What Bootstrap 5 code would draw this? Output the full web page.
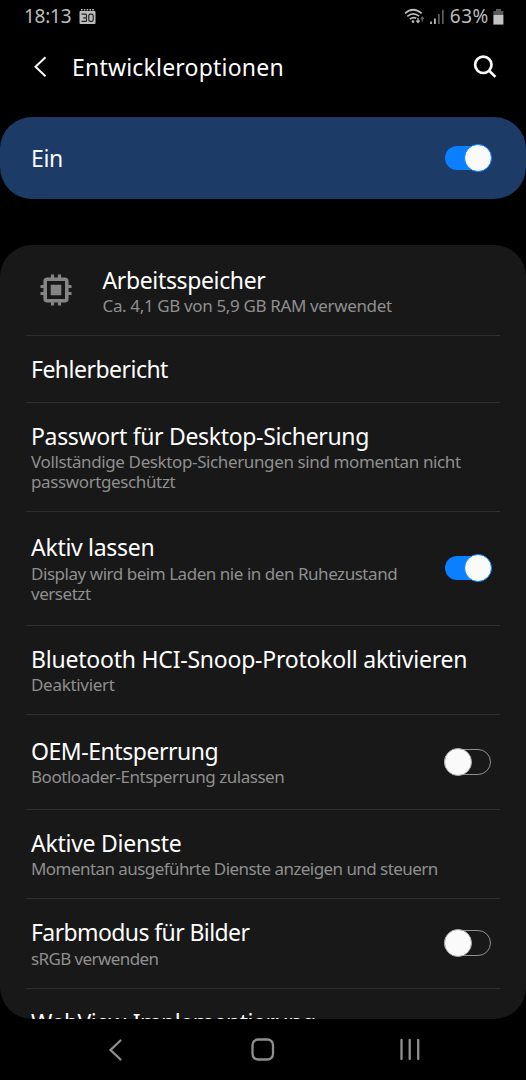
<!DOCTYPE html>
<html lang="de" data-bs-theme="dark">
<head>
<meta charset="utf-8">
<meta name="viewport" content="width=device-width, initial-scale=1">
<title>Entwickleroptionen</title>
<link href="https://cdn.jsdelivr.net/npm/bootstrap@5.3.0/dist/css/bootstrap.min.css" rel="stylesheet">
<style>
  body { background: #000; color: #fafafa; font-family: "Noto Sans", "Open Sans", sans-serif; }
  svg { display: block; flex: none; }
  .statusbar { height: 33px; padding: 0 22px 0 24px; color: #bcbcbc; font-size: 19px; line-height: 33px; letter-spacing: -.25px; }
  .statusbar .charge { margin-left: 6px; letter-spacing: .6px; }
  .appbar { height: 84px; padding: 0 29px 16px 33px; }
  .appbar h1 { font-size: 23px; line-height: 30px; letter-spacing: .2px; margin-left: 24px; }
  .master { height: 82px; margin-bottom: 46px; padding: 0 34px 0 31px; background: #1c3b66; border-radius: 32px; font-size: 23px; letter-spacing: -.3px; }
  .master span:first-child { margin-top: 1px; }
  .panel { height: 774px; background: #181818; border-radius: 32px; padding-top: .6px; }
  .entry { height: var(--h, 89.5px); margin: 0 26px; padding: var(--top, 18px) 8px 0 5px; border-bottom: 1.5px solid #2e2e2e; white-space: nowrap; }
  .entry h2 { font-size: 23px; line-height: 30px; margin: 0 0 1.9px; letter-spacing: var(--t, 0); }
  .entry p { font-size: 17px; line-height: 19.7px; color: #8f8f8f; letter-spacing: var(--s, 0); }
  .entry .toggle { align-self: center; margin-top: calc(-.6px - var(--top, 18px)); }
  .ram { --h: 90px; --top: 19px; --t: -.36px; --s: -.36px; }
  .bugreport { --h: 67px; --t: -.52px; }
  .backup { --h: 109px; --t: -.33px; --s: -.38px; }
  .awake { --h: 114.5px; --top: 20.5px; --t: -.3px; --s: -.46px; }
  .snoop { --h: 89px; --top: 17.5px; --t: -.22px; --s: -.3px; }
  .oem { --h: 94.5px; --top: 20.5px; --t: -.45px; --s: -.46px; }
  .running { --t: -.26px; --s: -.56px; }
  .colormode { --t: -.6px; --s: -.6px; }
  .webview { --t: -.5px; border: 0; }
  .toggle { position: relative; width: 48px; height: 28px; flex: none; }
  .toggle::before { content: ""; position: absolute; inset: 1px 1px 1px 0; border: 1.5px solid #8f8f8f; border-radius: 14px; }
  .toggle::after { content: ""; position: absolute; top: 0; left: 0; width: 28px; height: 28px; border: 1px solid #a5a5a5; border-radius: 50%; background: #fafafa; }
  .toggle.on::before { inset: 2px 2px 2px 1px; background: #0a7fff; border: 0; }
  .toggle.on::after { left: 20px; border-color: #0a7fff; }
  .navkeys { height: 61px; }
</style>
</head>
<body class="overflow-hidden">
<header>
  <div class="statusbar d-flex align-items-center">
    <span>18:13</span>
    <svg class="ms-2" width="17" height="16" viewBox="0 0 17 16"><path d="M1.5 2h14a1 1 0 0 1 1 1v11a1 1 0 0 1-1 1h-14a1 1 0 0 1-1-1V3a1 1 0 0 1 1-1z" fill="#bcbcbc"/><path d="M2 .8h13" stroke="#bcbcbc" stroke-width="1.4" stroke-dasharray="1.6 1.2"/><path d="M2.5 5.2h4q1 0 1 1V8q0 .8-.8.8H4M6.7 8.8q.8 0 .8.9v1.7q0 1-1 1h-4" fill="none" stroke="#222" stroke-width="1.2"/><rect x="9.8" y="5.2" width="4.4" height="7.2" rx="1.6" fill="none" stroke="#222" stroke-width="1.2"/></svg>
    <svg class="ms-auto" width="22" height="17" viewBox="0 0 22 17" fill="none" stroke="#bcbcbc" stroke-width="1.7"><path d="M1 5.4Q9 -1.9 17.6 5.4M3.3 8.4Q9 3.3 15.2 8.2M5.8 11.1Q9 8.5 12.2 10.3"/><circle cx="9" cy="13.6" r="1.3" fill="#bcbcbc" stroke="none"/><path d="M14 10v4M12.3 12.6l1.7 1.9 1.7-1.9" stroke-width="1.3"/><path d="M18.3 13.5V9.5M16.8 11l1.5-1.8 1.5 1.8" stroke="#666" stroke-width="1.2"/></svg>
    <svg class="ms-1" width="14" height="16" viewBox="0 0 14 16"><path d="M.3 12.5h1.5V15H.3zM4.1 9.5h1.6V15H4.1z" fill="#d0d0d0"/><path d="M8 5h1.7v10H8zM12 .7h1.7V15H12z" fill="#5c5c5c"/></svg>
    <span class="charge">63%</span>
    <svg class="ms-1 me-0" width="11" height="16" viewBox="0 0 11 16"><path d="M3 0h5v2h2.4v4H.4V2H3z" fill="#5a5a5a"/><path d="M.4 6h10v9.6H.4z" fill="#c4c4c4"/></svg>
  </div>
  <div class="appbar d-flex align-items-center">
    <svg width="15" height="22" viewBox="0 0 15 22"><path d="M12.5 1.2 2.5 10.7l10 9.5" fill="none" stroke="#fafafa" stroke-width="2"/></svg>
    <h1 class="mb-0 fw-normal">Entwickleroptionen</h1>
    <svg class="ms-auto" width="24" height="24" viewBox="0 0 24 24"><g fill="none" stroke="#fafafa" stroke-width="2.7"><circle cx="10.3" cy="9.8" r="8.2"/><path d="m16.2 15.7 6.2 6.2"/></g></svg>
  </div>
</header>
<main>
  <div class="master d-flex align-items-center justify-content-between"><span>Ein</span><span class="toggle on"></span></div>
  <div class="panel overflow-hidden">
    <section class="entry ram d-flex">
      <svg style="margin:9.4px 30.5px 0 9px" width="32" height="32" viewBox="0 0 32 32"><rect x="5.2" y="5.2" width="21.6" height="21.6" rx="2" fill="none" stroke="#858585" stroke-width="3.6"/><path d="M10.7 10.7h10.6v10.6H10.7z" fill="#858585"/><path d="M12.5.5v5M19.5.5v5M12.5 26.500v5M19.500 26.500v5M.5 12.500h5M.5 19.500h5M26.500 12.500h5M26.500 19.500h5" stroke="#858585" stroke-width="3.2"/></svg>
      <div><h2 class="fw-normal">Arbeitsspeicher</h2><p class="mb-0">Ca. 4,1 GB von 5,9 GB RAM verwendet</p></div>
    </section>
    <section class="entry bugreport"><h2 class="fw-normal">Fehlerbericht</h2></section>
    <section class="entry backup"><h2 class="fw-normal">Passwort für Desktop-Sicherung</h2><p class="mb-0">Vollständige Desktop-Sicherungen sind momentan nicht<br>passwortgeschützt</p></section>
    <section class="entry awake d-flex justify-content-between"><div><h2 class="fw-normal">Aktiv lassen</h2><p class="mb-0">Display wird beim Laden nie in den Ruhezustand<br>versetzt</p></div><span class="toggle on"></span></section>
    <section class="entry snoop"><h2 class="fw-normal">Bluetooth HCI-Snoop-Protokoll aktivieren</h2><p class="mb-0">Deaktiviert</p></section>
    <section class="entry oem d-flex justify-content-between"><div><h2 class="fw-normal">OEM-Entsperrung</h2><p class="mb-0">Bootloader-Entsperrung zulassen</p></div><span class="toggle"></span></section>
    <section class="entry running"><h2 class="fw-normal">Aktive Dienste</h2><p class="mb-0">Momentan ausgeführte Dienste anzeigen und steuern</p></section>
    <section class="entry colormode d-flex justify-content-between"><div><h2 class="fw-normal">Farbmodus für Bilder</h2><p class="mb-0">sRGB verwenden</p></div><span class="toggle"></span></section>
    <section class="entry webview"><h2 class="fw-normal">WebView-Implementierung</h2></section>
  </div>
</main>
<nav class="navkeys">
  <svg width="526" height="61" viewBox="0 0 526 61" fill="none" stroke="#8f8f8f" stroke-width="2.3" stroke-linecap="round"><path d="M120.5 21.500 110.500 31l10 9.500"/><rect x="252.500" y="20.500" width="20.500" height="20" rx="5.500"/><path d="M401.500 21v19M409.700 21v19M418.200 21v19"/></svg>
</nav>
<script src="https://cdn.jsdelivr.net/npm/bootstrap@5.3.0/dist/js/bootstrap.bundle.min.js"></script>
</body>
</html>
